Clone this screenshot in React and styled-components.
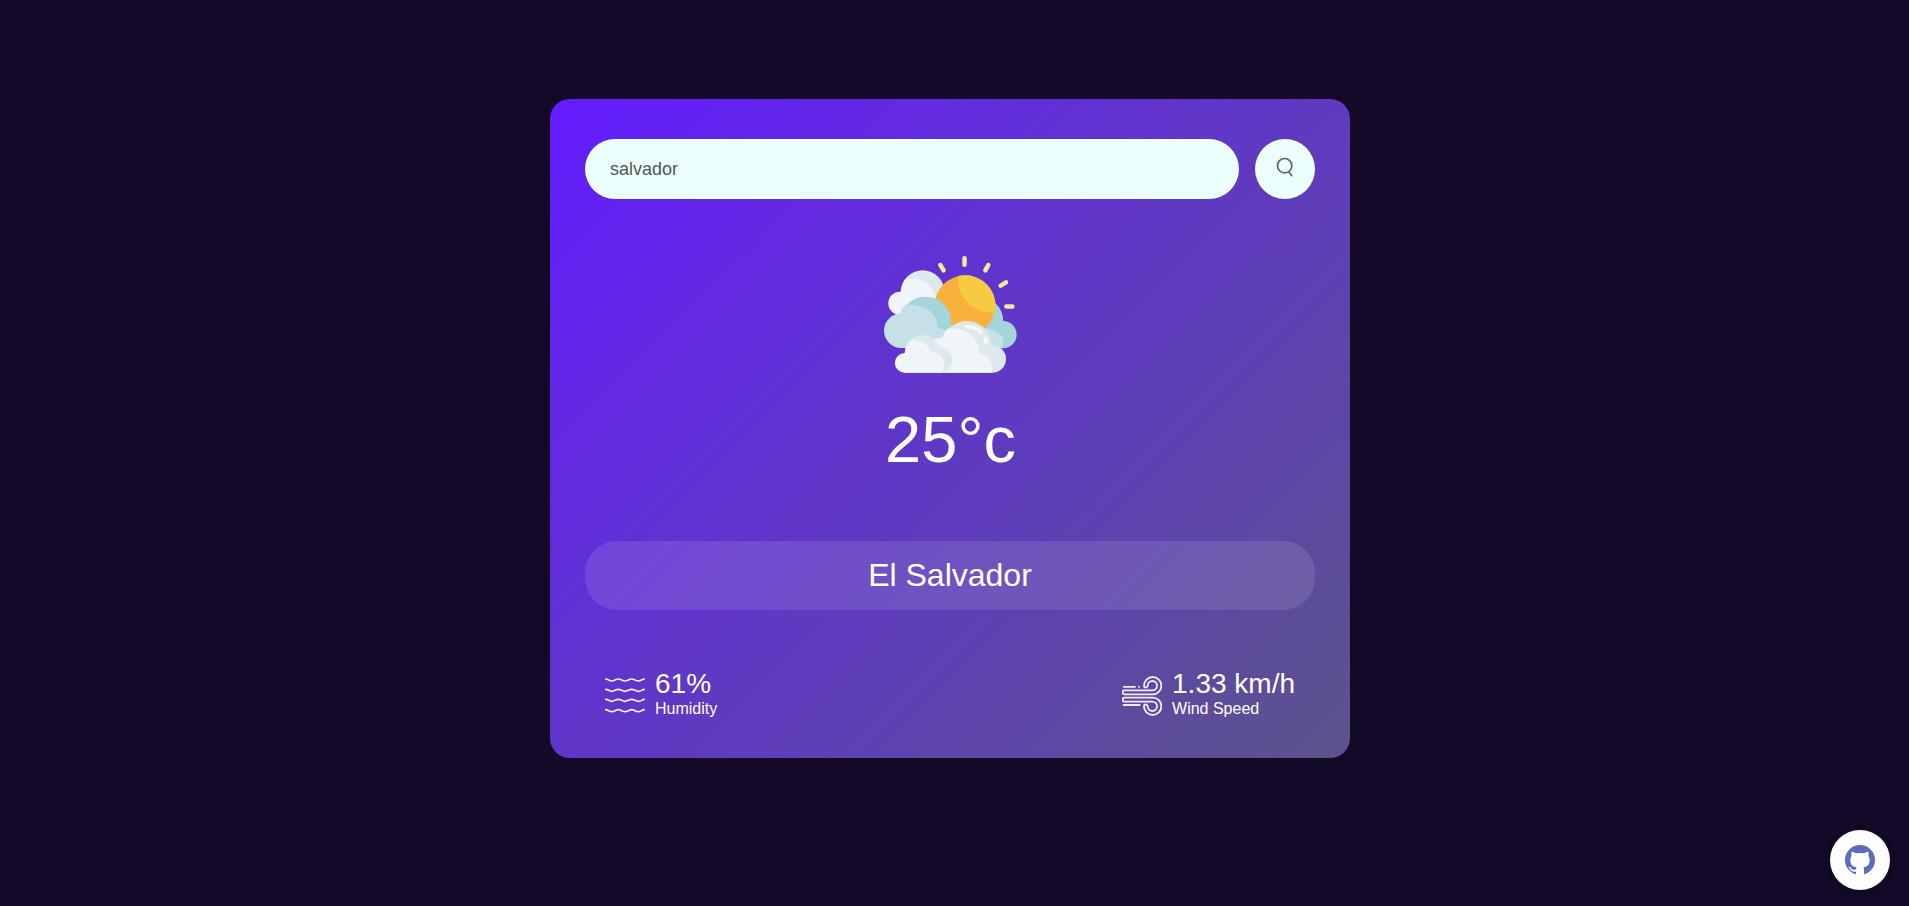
import React, { useState } from "react";
import styled, { createGlobalStyle } from "styled-components";

const GlobalStyle = createGlobalStyle`
  * { margin: 0; padding: 0; box-sizing: border-box; }
  body {
    background: #140a28;
    font-family: "Liberation Sans", Arial, sans-serif;
    overflow: hidden;
  }
`;

const Page = styled.main`
  width: 1900px;
  min-height: 906px;
  padding-top: 99px;
`;

const Card = styled.section`
  width: 800px;
  height: 659px;
  margin: 0 auto;
  padding: 40px 35px;
  border-radius: 20px;
  background: linear-gradient(135deg, #641cff, #5b548a);
  color: #fff;
  text-align: center;
`;

const SearchBar = styled.form`
  display: flex;
  align-items: center;
  gap: 16px;
`;

const SearchInput = styled.input`
  flex: 1;
  height: 60px;
  padding: 10px 25px;
  border: 0;
  outline: 0;
  border-radius: 30px;
  background: #ebfffc;
  color: #555;
  font: 18px "Liberation Sans", Arial, sans-serif;
`;

const SearchButton = styled.button`
  display: flex;
  align-items: center;
  justify-content: center;
  width: 60px;
  height: 60px;
  border: 0;
  border-radius: 50%;
  background: #ebfffc;
  cursor: pointer;
`;

const Weather = styled.div`
  display: flex;
  flex-direction: column;
  align-items: center;
  margin-top: 41px;
`;

const Temperature = styled.h1`
  margin-top: 13px;
  padding-left: 1px;
  font-size: 65px;
  line-height: 74px;
  font-weight: 500;
`;

const City = styled.h2`
  margin-top: 64px;
  width: 100%;
  height: 69px;
  border-radius: 32px;
  background: rgba(255, 255, 255, 0.11);
  font-size: 32px;
  line-height: 68px;
  font-weight: 400;
`;

const Details = styled.div`
  display: flex;
  justify-content: space-between;
  margin-top: 58px;
  padding: 0 20px;
`;

const Detail = styled.div`
  display: flex;
  gap: 10px;
  text-align: left;

  svg { margin-top: 8px; }
`;

const Value = styled.p`
  font-size: 28px;
  line-height: 32px;
`;

const Label = styled.p`
  font-size: 16px;
  line-height: 18px;
`;

const GithubLink = styled.a`
  position: fixed;
  right: 19px;
  bottom: 16px;
  width: 60px;
  height: 60px;
  display: flex;
  align-items: center;
  justify-content: center;
  border-radius: 50%;
  background: #fff;
  box-shadow: 0 2px 6px rgba(0, 0, 0, 0.4);
`;

const SearchIcon = () => (
  <svg width="24" height="24" viewBox="159 201 72 72" fill="none" stroke="#5e6261" strokeWidth="5">
    <circle cx="194" cy="227" r="21.500" />
    <path d="M205 244l11.500 15" />
  </svg>
);

const CloudSunIcon = () => (
  <svg width="160" height="150" viewBox="0 0 480 450">
    <path
      fill="none"
      stroke="#fae796"
      strokeWidth="13.500"
      strokeLinecap="round"
      d="M283.500 55v19M211 75l10 16M355 75l-9 16M408 127l-16 10M409 199.500h18"
    />
    <g fill="#dfe9ed">
      <circle cx="158" cy="157" r="66" />
    </g>
    <g fill="#eff5f8">
      <circle cx="90" cy="190" r="35" />
      <path d="M92 160Q94 135 104 119C145 107 180 125 196 165V223H90z" />
    </g>
    <g fill="#a5d5dc">
      <circle cx="325" cy="244" r="75" />
      <circle cx="399" cy="284" r="41" />
    </g>
    <path fill="#c5e1e7" d="M340 322V266q25-4 38 10q22 7 22 30q0 10-4 18z" />
    <circle cx="285" cy="197" r="91" fill="#fab03c" />
    <path fill="#f6ca43" d="M264 108.500a91 91 0 0 1 110 110q-40 1-66-18q-49-35-44-92z" />
    <path fill="#a5d5dc" d="M90 247a77 77 0 0 1 154 0v77H90z" />
    <g fill="#c5e1e7">
      <circle cx="94" cy="272" r="52" />
      <path d="M88 235Q92 208 104 196C153 186 204 215 204 264Q221 266 234 278V324H94z" />
    </g>
    <g fill="#dfe9ed">
      <path d="M215 318a75 75 0 0 1 150 0v80H215z" />
      <circle cx="367" cy="357" r="41" />
    </g>
    <path fill="#eff5f8" d="M190 398V298q12-5 27-5q5-15 14-26c52-8 96 23 96 72q39 9 40 44q0 8-3 15z" />
    <g fill="#dfe9ed">
      <path d="M104 342a54 54 0 0 1 108-4v60H104z" />
      <circle cx="209" cy="360" r="38" />
    </g>
    <g fill="#eff5f8">
      <circle cx="104" cy="368.500" r="29.500" />
      <path d="M104 398V342q1-25 19-40q45-6 61 34q38 0 38 38q0 14-6 24z" />
    </g>
    <path fill="none" stroke="#f5f9fa" strokeWidth="11" strokeLinecap="round" d="M290 260q27-1 43 18M345 296l4 10" />
  </svg>
);

const HumidityIcon = () => (
  <svg width="40" height="40" viewBox="45 63 120 120" fill="none" stroke="#f3effc" strokeWidth="5" strokeLinecap="round">
    {[75, 106, 136, 167].map((y) => (
      <path key={y} d={`M47 ${y - 3}c8 0 10 6 18 6s12-6 20-6s12 6 20 6s12-6 20-6s12 6 20 6s10-5 18-6`} />
    ))}
  </svg>
);

const WindIcon = () => (
  <svg width="40" height="40" viewBox="36 63 120 120" fill="none" stroke="#efecf7" strokeWidth="5.600" strokeLinecap="round">
    <path d="M41 95.500h34M87 95.500h.5" />
    <path d="M128 118H44a6 6 0 0 1 0-12h83a14 14 0 1 0-14-14a5.500 5.500 0 0 1-11 0a26 26 0 1 1 26 26" />
    <path d="M128 128H44a6 6 0 0 0 0 12h83a14 14 0 1 1-14 14a5.500 5.500 0 0 0-11 0a26 26 0 1 0 26-26" />
    <path d="M41 150h48" />
  </svg>
);

const GithubIcon = () => (
  <svg width="30" height="30" viewBox="105 105 90 90">
    <circle cx="150" cy="150" r="45" fill="#5c6bc0" />
    <path
      fill="#fff"
      d="M138 196v-11c-9 2-15-1-18-7q-2-4-5-6q-1-3 4-1q4 2 6 5q4 6 13 2q0-3 2-6c-12-2-19-8-19-22q0-8 4-13q-2-6 0-12q7 0 13 5q12-2 24 0q6-5 13-5q2 6 0 12q4 5 4 13c0 14-7 20-19 22q2 3 2 7v17z"
    />
  </svg>
);

export default function App() {
  const [query, setQuery] = useState("salvador");

  return (
    <>
      <GlobalStyle />
      <Page>
        <Card>
          <SearchBar onSubmit={(e) => e.preventDefault()}>
            <SearchInput value={query} spellCheck={false} onChange={(e) => setQuery(e.target.value)} />
            <SearchButton aria-label="Search"><SearchIcon /></SearchButton>
          </SearchBar>
          <Weather>
            <CloudSunIcon />
            <Temperature>25°c</Temperature>
            <City>El Salvador</City>
          </Weather>
          <Details>
            <Detail>
              <HumidityIcon />
              <div>
                <Value>61%</Value>
                <Label>Humidity</Label>
              </div>
            </Detail>
            <Detail>
              <WindIcon />
              <div>
                <Value>1.33 km/h</Value>
                <Label>Wind Speed</Label>
              </div>
            </Detail>
          </Details>
        </Card>
      </Page>
      <GithubLink href="#" aria-label="GitHub"><GithubIcon /></GithubLink>
    </>
  );
}
